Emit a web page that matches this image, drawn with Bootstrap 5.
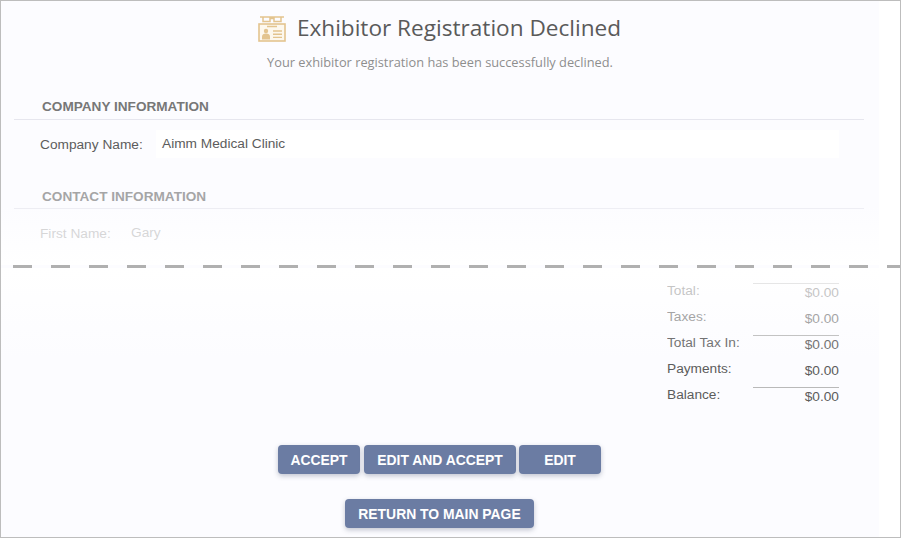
<!DOCTYPE html>
<html lang="en">
<head>
<meta charset="utf-8">
<title>Exhibitor Registration Declined</title>
<link href="https://cdn.jsdelivr.net/npm/bootstrap@5.3.0/dist/css/bootstrap.min.css" rel="stylesheet">
<style>
html,body{height:100%;background:#fff;overflow:hidden}
body{font-family:"Liberation Sans",Arial,sans-serif}
.frame{width:901px;height:538px;border:1px solid #bdbdbd;position:relative;overflow:hidden;background:#fff}
.sheet{width:878px;height:536px;background:#fcfcff}
.upper{height:264px;padding-top:11px;background:linear-gradient(#fcfcff 78%,#fff 100%)}
.page-head{font-family:"Open Sans",sans-serif;font-size:22.6px;line-height:32px;color:#5a5a5a;gap:11px;margin:0;font-weight:400;padding-right:1px}
.page-sub{font-family:"Open Sans",sans-serif;font-size:12.8px;line-height:18px;color:#8e8e8e;margin:9px 0 0;text-align:center}
.sect{margin:0 15px 0 13px;border-bottom:1px solid #e6e6ee;padding:0 0 2px 28px;font-size:13.6px;line-height:20px;font-weight:700;color:#777}
.sect-first{margin-top:26px}
.sect-second{margin-top:29px;opacity:.65;padding-bottom:1px}
.field{margin:10px 40px 0 39px;font-size:13.7px;line-height:27px;color:#5c5c5c}
.field-label{width:116px;margin:0;padding-top:1px}
.field-value{flex:1;background:#fff;padding-left:6px;color:#5c5c5c}
.faded{opacity:.24;margin-top:10px}
.faded .field-label{width:91px}
.faded .field-value{background:transparent;padding-left:0}
.tear{height:3px;margin-left:12px;width:889px;background:repeating-linear-gradient(90deg,#b0b0b0 0 19px,transparent 19px 38px)}
.lower{padding-top:15px;background:linear-gradient(#fff 0,#fcfcff 90px)}
.sums{width:172px;margin:0 40px 0 auto;font-size:13.7px;color:#5c5c5c}
.sum-row{height:26px}
.sum-label{line-height:15px}
.sum-val{width:86px;text-align:right;line-height:18px;border-top:1px solid transparent}
.ruled .sum-val{border-top-color:#b9b9b9}
.op1{opacity:.35}.op2{opacity:.55}.op3{opacity:.85}
.act{background:#6b7ca3;color:#fff;border:0;border-radius:4px;font-size:13.9px;font-weight:700;line-height:31px;height:29px;padding:0;box-shadow:0 2px 5px rgba(60,70,100,.3)}
.act:hover{background:#6b7ca3;color:#fff}
.acts{margin-top:32px;width:877px}
.w1{width:82px;margin-right:4px}.w2{width:152px;margin-right:3px}.w3{width:82px}.w4{width:189px}
.acts-2{margin-top:25px;width:877px}
.id-icon{flex:none}
</style>
</head>
<body class="m-0">
<div class="frame">
  <div class="sheet">
    <div class="upper">
      <h1 class="page-head d-flex justify-content-center align-items-center">
        <svg class="id-icon" width="28" height="28" viewBox="0 0 28 28" fill="none" aria-hidden="true">
          <path d="M2 3h24M5 3h7v4.5H5zM16 3h7v4.5h-7zM12 4.5h4" stroke="#e3c48f" stroke-width="1.5"/>
          <rect x="1" y="10" width="26" height="17" fill="#fdf8ee" stroke="#e3c48f" stroke-width="1.6"/>
          <path d="M9 12.5h10" stroke="#e3c48f" stroke-width="1.5"/>
          <circle cx="8" cy="17" r="2.2" fill="#e3c48f"/>
          <path d="M4 25.5v-3c0-2 1.6-3 4-3s4 1 4 3v3z" fill="#e3c48f"/>
          <path d="M15 17h9M15 20.2h9M15 23.4h9" stroke="#e3c48f" stroke-width="1.4"/>
        </svg>
        <span>Exhibitor Registration Declined</span>
      </h1>
      <p class="page-sub">Your exhibitor registration has been successfully declined.</p>
      <div class="sect sect-first">COMPANY INFORMATION</div>
      <div class="field d-flex">
        <div class="field-label">Company Name:</div>
        <div class="field-value">Aimm Medical Clinic</div>
      </div>
      <div class="sect sect-second">CONTACT INFORMATION</div>
      <div class="field faded d-flex">
        <div class="field-label">First Name:</div>
        <div class="field-value">Gary</div>
      </div>
    </div>
    <div class="tear"></div>
    <div class="lower">
      <div class="sums">
        <div class="sum-row ruled op1 d-flex justify-content-between"><span class="sum-label">Total:</span><span class="sum-val">$0.00</span></div>
        <div class="sum-row op2 d-flex justify-content-between"><span class="sum-label">Taxes:</span><span class="sum-val">$0.00</span></div>
        <div class="sum-row ruled op3 d-flex justify-content-between"><span class="sum-label">Total Tax In:</span><span class="sum-val">$0.00</span></div>
        <div class="sum-row d-flex justify-content-between"><span class="sum-label">Payments:</span><span class="sum-val">$0.00</span></div>
        <div class="sum-row ruled d-flex justify-content-between"><span class="sum-label">Balance:</span><span class="sum-val">$0.00</span></div>
      </div>
      <div class="acts d-flex justify-content-center">
        <button type="button" class="btn act w1">ACCEPT</button>
        <button type="button" class="btn act w2">EDIT AND ACCEPT</button>
        <button type="button" class="btn act w3">EDIT</button>
      </div>
      <div class="acts-2 d-flex justify-content-center">
        <button type="button" class="btn act w4">RETURN TO MAIN PAGE</button>
      </div>
    </div>
  </div>
</div>
<script src="https://cdn.jsdelivr.net/npm/bootstrap@5.3.0/dist/js/bootstrap.bundle.min.js"></script>
</body>
</html>
